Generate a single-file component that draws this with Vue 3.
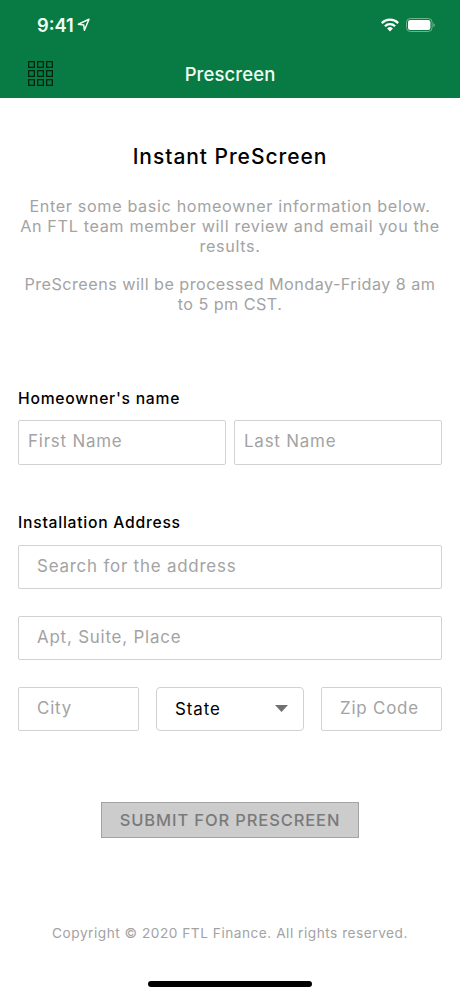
<script setup>
import { ref } from 'vue'

const intro = [
  'Enter some basic homeowner information below.',
  'An FTL team member will review and email you the',
  'results.',
]
const hours = ['PreScreens will be processed Monday-Friday 8 am', 'to 5 pm CST.']
const firstName = ref('')
const lastName = ref('')
const address = ref('')
const unit = ref('')
const city = ref('')
const zip = ref('')
</script>

<template>
  <main class="screen">
    <header class="header">
      <div class="status">
        <span class="time">9:41</span>
        <svg class="location" width="14" height="14" viewBox="0 0 14 14">
          <path d="M1.3 6.2 12 1.3 7.4 12.2 6.7 6.9Z" fill="none" stroke="#effff3" stroke-width="1.5" stroke-linejoin="round" />
        </svg>
        <svg class="wifi" width="18" height="14" viewBox="0 0 18 14">
          <g fill="none" stroke="#fff" stroke-width="2.3">
            <path d="M.8 5.1a11.6 11.6 0 0 1 16.4 0" />
            <path d="M3.9 8.3a7.2 7.2 0 0 1 10.2 0" />
          </g>
          <path d="M6.1 10.4a4.1 4.1 0 0 1 5.8 0L9 13.4Z" fill="#fff" />
        </svg>
        <svg class="battery" width="30" height="14" viewBox="0 0 30 14">
          <rect x=".5" y=".5" width="25.6" height="13" rx="3.8" fill="none" stroke="#6fb58c" />
          <rect x="2" y="2" width="22.4" height="10" rx="2.3" fill="#fff" />
          <path d="M27.3 4.9q1.6.7 1.6 2.1t-1.6 2.1Z" fill="#6fb58c" />
        </svg>
      </div>
      <div class="nav">
        <button class="menu" aria-label="Menu">
          <svg width="25" height="25" viewBox="0 0 25 25">
            <g v-for="row in 3" :key="row" fill="none" stroke="#04260f" stroke-width="1.3">
              <rect v-for="col in 3" :key="col" :x="col * 9 - 8.35" :y="row * 9 - 8.35" width="5.7" height="5.7" />
            </g>
          </svg>
        </button>
        <span class="nav-title">Prescreen</span>
      </div>
    </header>

    <section class="intro">
      <h1>Instant PreScreen</h1>
      <p><span v-for="line in intro" :key="line">{{ line }}</span></p>
      <p class="hours"><span v-for="line in hours" :key="line">{{ line }}</span></p>
    </section>

    <form class="form" @submit.prevent>
      <h2>Homeowner's name</h2>
      <div class="row names">
        <input v-model="firstName" placeholder="First Name" />
        <input v-model="lastName" placeholder="Last Name" />
      </div>
      <h2 class="address-title">Installation Address</h2>
      <div class="address">
        <input v-model="address" placeholder="Search for the address" />
        <input v-model="unit" placeholder="Apt, Suite, Place" />
        <div class="row place">
          <input v-model="city" placeholder="City" />
          <button type="button" class="select">
            <span>State</span>
            <svg width="13" height="7" viewBox="0 0 13 7"><path d="M0 0H13L6.5 7Z" fill="#707070" /></svg>
          </button>
          <input v-model="zip" placeholder="Zip Code" />
        </div>
      </div>
      <button class="submit" disabled>SUBMIT FOR PRESCREEN</button>
    </form>

    <footer class="footer">
      <span>Copyright © 2020 FTL Finance. All rights reserved.</span>
      <div class="home-bar"></div>
    </footer>
  </main>
</template>

<style>
body {
  margin: 0;
  background: #fff;
}
</style>

<style scoped>
* {
  box-sizing: border-box;
}
.screen {
  width: 460px;
  height: 996px;
  overflow: hidden;
  display: flex;
  flex-direction: column;
  background: #fff;
  color: #000;
  font-family: Inter, "Liberation Sans", sans-serif;
}
.header {
  height: 98px;
  background: #087a43;
  color: #effff3;
}
.status {
  height: 50px;
  padding: 0 24px 0 37px;
  display: flex;
  align-items: center;
}
.time {
  font-size: 18.3px;
  font-weight: 600;
  letter-spacing: 0;
}
.location {
  margin-left: 3px;
}
.wifi {
  margin-left: auto;
}
.battery {
  margin-left: 7px;
}
.nav {
  height: 46px;
  display: grid;
  grid-template-columns: 1fr auto 1fr;
  align-items: center;
  padding: 0 28px;
}
.menu {
  width: 25px;
  height: 25px;
  padding: 0;
  border: 0;
  background: none;
}
.menu svg {
  display: block;
}
.nav-title {
  padding-top: 1px;
  font-size: 18.5px;
  font-weight: 500;
  letter-spacing: 0.1px;
}
.intro {
  height: 292px;
  padding-top: 45px;
  text-align: center;
}
h1 {
  margin: 0 0 25px;
  font-size: 21px;
  line-height: 28px;
  font-weight: 500;
  letter-spacing: 0.95px;
}
.intro p {
  margin: 0 0 18px;
  color: #a3a3a3;
  font-size: 16.2px;
  line-height: 20px;
  font-weight: 400;
  letter-spacing: 0.64px;
}
.intro .hours {
  letter-spacing: 0.46px;
}
.intro p span {
  display: block;
  white-space: nowrap;
}
.form {
  padding: 0 18px;
  display: flex;
  flex-direction: column;
}
h2 {
  margin: 0;
  height: 30px;
  font-size: 15.7px;
  line-height: 17px;
  font-weight: 500;
  letter-spacing: 0.74px;
}
.address-title {
  height: 31px;
  margin-top: 49px;
}
.row {
  display: grid;
}
.names {
  grid-template-columns: 1fr 1fr;
  gap: 8px;
}
.address {
  display: grid;
  gap: 27px;
}
.place {
  grid-template-columns: 121px 148px 121px;
  justify-content: space-between;
}
input,
.select {
  width: 100%;
  min-width: 0;
  height: 44px;
  margin: 0;
  padding: 0 18px 3px;
  border: 1px solid #d1d3d3;
  border-radius: 2px;
  background: #fff;
  color: #000;
  font-family: inherit;
  font-size: 16.9px;
  font-weight: 400;
  letter-spacing: 0.8px;
}
.names input {
  height: 45px;
  padding: 0 9px 3px;
}
input::placeholder {
  color: #a3a3a3;
  opacity: 1;
}
.select {
  display: flex;
  align-items: center;
  justify-content: space-between;
  padding: 0 15px 0 18px;
  border-radius: 4px;
  letter-spacing: 0.95px;
}
.select svg {
  margin-bottom: 2px;
}
.submit {
  align-self: center;
  width: 258px;
  height: 36px;
  margin-top: 71px;
  padding: 0;
  border: 1px solid #a3a3a3;
  background: #ccc;
  color: #7a7a7a;
  font-family: inherit;
  font-size: 16.5px;
  font-weight: 500;
  letter-spacing: 0.88px;
}
.footer {
  margin-top: auto;
  height: 72px;
  display: flex;
  flex-direction: column;
  align-items: center;
  justify-content: space-between;
  padding-bottom: 9px;
  color: #a3a3a3;
  font-size: 13.7px;
  line-height: 18px;
  font-weight: 400;
  letter-spacing: 0.5px;
}
.home-bar {
  width: 164px;
  height: 6px;
  border-radius: 3px;
  background: #000;
}
</style>
